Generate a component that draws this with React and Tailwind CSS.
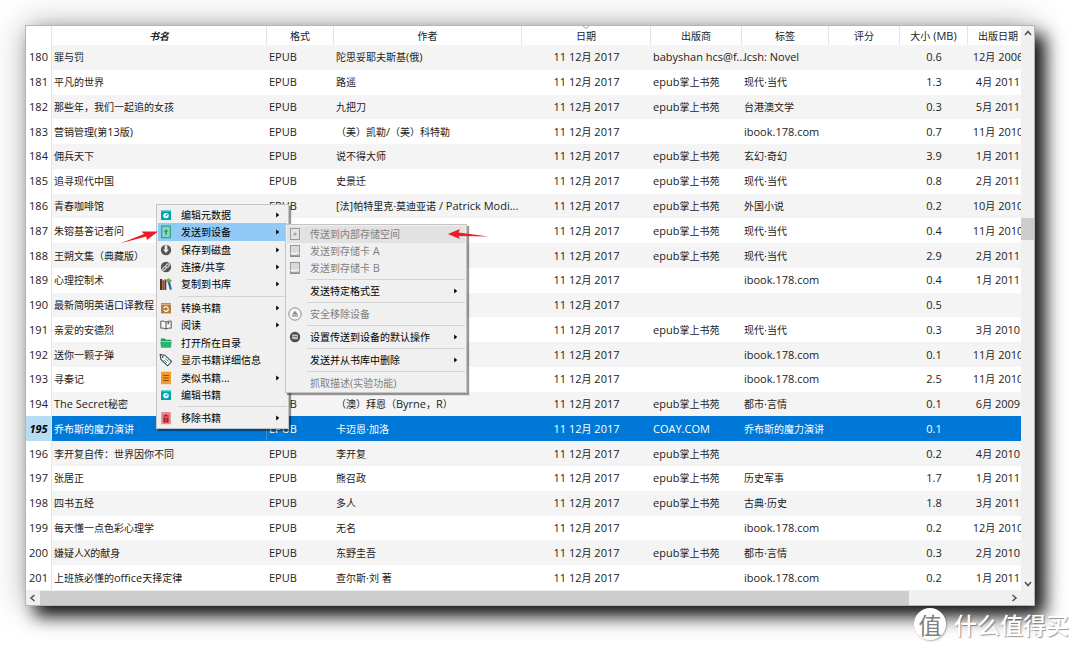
// App.jsx
import React from 'react';

const publisher = 'epub掌上书苑';
const addedOn = '11 12月 2017';

const books = [
    { id: 180, title: '罪与罚', author: '陀思妥耶夫斯基(俄)', publisher: 'babyshan hcs@f...', tags: 'lcsh: Novel', size: '0.6', published: '12月 2006' },
    { id: 181, title: '平凡的世界', author: '路遥', publisher, tags: '现代·当代', size: '1.3', published: '4月 2011' },
    { id: 182, title: '那些年，我们一起追的女孩', author: '九把刀', publisher, tags: '台港澳文学', size: '0.3', published: '5月 2011' },
    { id: 183, title: '营销管理(第13版)', author: '（美）凯勒/（美）科特勒', publisher: '', tags: 'ibook.178.com', size: '0.7', published: '11月 2010' },
    { id: 184, title: '佣兵天下', author: '说不得大师', publisher, tags: '玄幻·奇幻', size: '3.9', published: '1月 2011' },
    { id: 185, title: '追寻现代中国', author: '史景迁', publisher, tags: '现代·当代', size: '0.8', published: '2月 2011' },
    { id: 186, title: '青春咖啡馆', author: '[法]帕特里克·莫迪亚诺 / Patrick Modi...', publisher, tags: '外国小说', size: '0.2', published: '10月 2010' },
    { id: 187, title: '朱镕基答记者问', author: '', publisher, tags: '现代·当代', size: '0.4', published: '11月 2010' },
    { id: 188, title: '王朔文集（典藏版）', author: '', publisher, tags: '现代·当代', size: '2.9', published: '2月 2011' },
    { id: 189, title: '心理控制术', author: '', publisher: '', tags: 'ibook.178.com', size: '0.4', published: '1月 2011' },
    { id: 190, title: '最新简明英语口译教程', author: '', publisher: '', tags: '', size: '0.5', published: '' },
    { id: 191, title: '亲爱的安德烈', author: '', publisher, tags: '现代·当代', size: '0.3', published: '3月 2010' },
    { id: 192, title: '送你一颗子弹', author: '', publisher: '', tags: 'ibook.178.com', size: '0.1', published: '11月 2010' },
    { id: 193, title: '寻秦记', author: '', publisher: '', tags: 'ibook.178.com', size: '2.5', published: '11月 2010' },
    { id: 194, title: 'The Secret秘密', author: '（澳）拜恩（Byrne，R）', publisher, tags: '都市·言情', size: '0.1', published: '6月 2009' },
    { id: 195, title: '乔布斯的魔力演讲', author: '卡迈恩·加洛', publisher: 'COAY.COM', tags: '乔布斯的魔力演讲', size: '0.1', published: '' },
    { id: 196, title: '李开复自传：世界因你不同', author: '李开复', publisher, tags: '', size: '0.2', published: '4月 2010' },
    { id: 197, title: '张居正', author: '熊召政', publisher, tags: '历史军事', size: '1.7', published: '1月 2011' },
    { id: 198, title: '四书五经', author: '多人', publisher, tags: '古典·历史', size: '1.8', published: '3月 2011' },
    { id: 199, title: '每天懂一点色彩心理学', author: '无名', publisher: '', tags: 'ibook.178.com', size: '0.2', published: '12月 2010' },
    { id: 200, title: '嫌疑人X的献身', author: '东野圭吾', publisher, tags: '都市·言情', size: '0.3', published: '2月 2010' },
    { id: 201, title: '上班族必懂的office天择定律', author: '查尔斯·刘 著', publisher: '', tags: 'ibook.178.com', size: '0.2', published: '1月 2011' },
];

const selectedId = 195;

// Chinese runs are set one size smaller than the latin text around them
const Mixed = ({ text }) =>
    text
        .split(/([\u3000-\u303f\u4e00-\u9fff\uff00-\uffef]+)/)
        .filter(Boolean)
        .map((part, i) =>
            /[\u3000-\u303f\u4e00-\u9fff\uff00-\uffef]/.test(part)
                ? <span key={i} className="text-[10px]">{part}</span>
                : part
        );

const EditIcon = () => (
    <svg viewBox="0 0 12 12" className="size-3">
        <path d="M1 1h10v10H1z" fill="#00a4ae" />
        <path d="M1 1h10v1.4H1z" fill="#6fd0d4" />
        <circle cx="6" cy="6.6" r="2.7" fill="#fff" />
        <path d="M5 7.6l.3-1.2 1.7-1.7.9.9-1.7 1.7z" fill="#00a4ae" />
    </svg>
);

const SendIcon = () => (
    <svg viewBox="0 0 12 14" className="h-3.5 w-3">
        <rect x="1.7" y="1.2" width="8.6" height="11.4" fill="#93d3cf" stroke="#27ae73" strokeWidth="1.3" />
        <path d="M6 4l2.4 2.8H6.9v3H5.1v-3H3.6z" fill="#27a060" />
    </svg>
);

const SaveIcon = () => (
    <svg viewBox="0 0 12 12" className="size-3">
        <circle cx="6" cy="6" r="5.2" fill="#555" />
        <path d="M4.7 1.2h2.6v4.400h1.6L6 9 3.100 5.600h1.600z" fill="#eee" />
    </svg>
);

const ShareIcon = () => (
    <svg viewBox="0 0 12 12" className="size-3">
        <circle cx="6" cy="6" r="5.2" fill="#555" />
        <g fill="none" stroke="#eee" strokeWidth="1">
            <rect x="5.6" y="3.4" width="4" height="2.4" rx="1.2" transform="rotate(-45 7.6 4.6)" />
            <rect x="2.4" y="6.2" width="4" height="2.4" rx="1.2" transform="rotate(-45 4.4 7.4)" />
        </g>
    </svg>
);

const LibraryIcon = () => (
    <svg viewBox="0 0 12 12" className="size-3">
        <path d="M0 1h2.3v11H0z" fill="#4a3428" />
        <path d="M2.3 2.4h2.2V12H2.3z" fill="#b3472b" />
        <path d="M4.5 1.4h1.8V12H4.5z" fill="#59432f" />
        <path d="M7.500 3.200l2.200-.5 2.200 8.600-2 .6z" fill="#2f62a8" />
        <path d="M6 3.400L7 1l2.200-.8.8 1.200 1.800.6-.8 2-1.800-.2-1.200.8z" fill="#68ad3c" />
    </svg>
);

const ConvertIcon = () => (
    <svg viewBox="0 0 12 12" className="size-3">
        <path d="M1 1h10v10.4H1z" fill="#b97a3c" />
        <path d="M1 1.8h10v.9H1z" fill="#e5c7a5" />
        <circle cx="6" cy="7" r="2.3" fill="none" stroke="#fff" strokeWidth="1.2" strokeDasharray="5.5 1.7" />
    </svg>
);

const ReadIcon = () => (
    <svg viewBox="0 0 12 12" className="size-3">
        <path d="M6 3.2C4.8 2.2 3 2 .8 2.2v7c2.200-.2 4 0 5.200 1 1.200-1 3-1.200 5.200-1v-7C9 2 7.200 2.200 6 3.200zM6 3.200v7" fill="#f6f6f6" stroke="#555" strokeWidth="1" />
        <path d="M7.600 2.600h1.600v3l-.8-.7-.8.7z" fill="#666" />
    </svg>
);

const FolderIcon = () => (
    <svg viewBox="0 0 12 12" className="size-3">
        <path d="M.8 1.500h4l1 1.200h5.400v1.500H.8z" fill="#1f9a57" />
        <path d="M.3 4.800h11.400L11 10.800H1z" fill="#2bb56d" />
    </svg>
);

const TagIcon = () => (
    <svg viewBox="0 0 14 14" className="size-3.5">
        <path d="M1.200 1.600l4.600.6 6.800 6.400-4 4.200-6.800-6.600z" fill="#fff" stroke="#444" strokeWidth="1.100" />
        <circle cx="3.700" cy="4" r=".9" fill="#444" />
        <path d="M6 5.200l3.600 3.400M5 7l3 3" stroke="#2aa9b8" strokeWidth="1" />
    </svg>
);

const SimilarIcon = () => (
    <svg viewBox="0 0 12 14" className="h-3.5 w-3">
        <path d="M1 .8h10v12.400H1z" fill="#f39a2c" />
        <path d="M3.200 4.500h5.600M3.200 7h5.600M3.200 9.500h5.600" stroke="#8a5210" strokeWidth="1" />
    </svg>
);

const RemoveIcon = () => (
    <svg viewBox="0 0 12 14" className="h-3.5 w-3">
        <path d="M1.200 1h9.600v12.200H1.200z" fill="#e58a90" />
        <path d="M3 4.600h6v1H3zM4.800 3.400h2.400v1H4.800zM3.400 6.400h5.200v5H3.400z" fill="#b3121f" />
        <path d="M4.800 8h2.400M4.800 9.800h2.400" stroke="#e58a90" strokeWidth=".7" />
    </svg>
);

const MemoryIcon = () => (
    <svg viewBox="0 0 12 14" className="h-3.5 w-3">
        <rect x="1.500" y="1.500" width="9" height="11" fill="#e4e4e4" stroke="#999" />
        <circle cx="6" cy="7" r="1.600" fill="#999" />
        <circle cx="6" cy="7" r=".6" fill="#eee" />
    </svg>
);

const CardIcon = () => (
    <svg viewBox="0 0 12 14" className="h-3.5 w-3">
        <rect x="1.500" y="1.500" width="9" height="11" fill="#d9d9d9" stroke="#999" />
        <path d="M1.500 9.500c2-1.500 3 1 5 0s2-2 4 0" fill="none" stroke="#fff" />
        <path d="M1.500 12h9" stroke="#888" strokeWidth="1.400" />
    </svg>
);

const EjectIcon = () => (
    <svg viewBox="0 0 14 14" className="size-3.5">
        <circle cx="7" cy="7" r="6.200" fill="#f6f6f6" stroke="#8c8c8c" />
        <path d="M7 3.800l3 3.600H4zM4 8.200h6v1.300H4z" fill="#8a8a8a" />
    </svg>
);

const DefaultIcon = () => (
    <svg viewBox="0 0 12 12" className="size-3">
        <circle cx="6" cy="6" r="5.200" fill="#4a4a4a" />
        <path d="M3.300 3.600h5.400v4.600H3.300z" fill="#ddd" />
        <path d="M4 5.300h4M4.400 7h1M6.600 7h1" stroke="#4a4a4a" strokeWidth=".9" />
    </svg>
);

const mainMenu = [
    { label: '编辑元数据', icon: <EditIcon />, more: true },
    { label: '发送到设备', icon: <SendIcon />, more: true, active: true },
    { label: '保存到磁盘', icon: <SaveIcon />, more: true },
    { label: '连接/共享', icon: <ShareIcon />, more: true },
    { label: '复制到书库', icon: <LibraryIcon />, more: true },
    null,
    { label: '转换书籍', icon: <ConvertIcon />, more: true },
    { label: '阅读', icon: <ReadIcon />, more: true },
    { label: '打开所在目录', icon: <FolderIcon /> },
    { label: '显示书籍详细信息', icon: <TagIcon /> },
    { label: '类似书籍...', icon: <SimilarIcon />, more: true },
    { label: '编辑书籍', icon: <EditIcon /> },
    null,
    { label: '移除书籍', icon: <RemoveIcon />, more: true },
];

const sendMenu = [
    { label: '传送到内部存储空间', icon: <MemoryIcon />, disabled: true, hover: true },
    { label: '发送到存储卡 A', icon: <CardIcon />, disabled: true },
    { label: '发送到存储卡 B', icon: <CardIcon />, disabled: true },
    null,
    { label: '发送特定格式至', more: true },
    null,
    { label: '安全移除设备', icon: <EjectIcon />, disabled: true },
    null,
    { label: '设置传送到设备的默认操作', icon: <DefaultIcon />, more: true },
    null,
    { label: '发送并从书库中删除', more: true },
    null,
    { label: '抓取描述(实验功能)', disabled: true },
];

const Menu = ({ items, className }) => (
    <div role="menu" className={`absolute flex flex-col border border-[#c4c4c4] bg-[#f0f0f0] p-px shadow-[2px_2px_1px_rgba(0,0,0,0.4)] ${className}`}>
        {items.map((item, i) => item === null ? (
            <div key={i} role="separator" className="ml-5 flex h-[6px] items-center">
                <div className="h-px w-full bg-[#d4d4d4]"></div>
            </div>
        ) : (
            <button
                key={i}
                type="button"
                role="menuitem"
                disabled={item.disabled}
                className={`flex min-h-0 flex-1 items-center pr-[7px] text-left leading-4 ${item.disabled ? 'text-[#808080]' : 'text-black'} ${item.active ? 'bg-[#91c9f7]' : ''} ${item.hover ? 'bg-[#e2e2e2]' : ''}`}
            >
                <span className="flex w-4 shrink-0 justify-center">{item.icon}</span>
                <span className="ml-[7px] flex-1 whitespace-nowrap"><Mixed text={item.label} /></span>
                {item.more && (
                    <svg viewBox="0 0 4 6" className="h-[6px] w-1"><path d="M.2.400l3 2.600-3 2.600z" fill="#000" /></svg>
                )}
            </button>
        ))}
    </div>
);

const Chevron = ({ d }) => (
    <svg viewBox="0 0 8 8" className="size-2"><path d={d} fill="none" stroke="#505050" strokeWidth="1.500" /></svg>
);

const headCell = 'border-r border-[#e5e5e5] p-0 font-normal';
const cell = 'whitespace-nowrap p-0 pl-[2px]';

const BookTable = () => (
    <table className="h-full w-full table-fixed border-separate border-spacing-0 bg-white">
        <colgroup>
            <col className="w-[26px]" />
            <col />
            <col className="w-[67px]" />
            <col className="w-[188px]" />
            <col className="w-[129px]" />
            <col className="w-[91px]" />
            <col className="w-[87px]" />
            <col className="w-[71px]" />
            <col className="w-[68px]" />
            <col className="w-[53px]" />
        </colgroup>
        <thead>
            <tr className="h-[19px]">
                <th className={headCell}></th>
                <th className={`${headCell} italic`}><span className="text-[10px] font-bold">书名</span></th>
                <th className={headCell}><Mixed text="格式" /></th>
                <th className={headCell}><Mixed text="作者" /></th>
                <th className={`${headCell} relative`}>
                    <svg viewBox="0 0 6 3" className="absolute left-1/2 top-0 h-[3px] w-[6px] -translate-x-1/2"><path d="M0 0l3 2.500L6 0" fill="none" stroke="#888" strokeWidth=".8" /></svg>
                    <Mixed text="日期" />
                </th>
                <th className={headCell}><Mixed text="出版商" /></th>
                <th className={headCell}><Mixed text="标签" /></th>
                <th className={headCell}><Mixed text="评分" /></th>
                <th className={headCell}><Mixed text="大小 (MB)" /></th>
                <th className="overflow-hidden p-0 font-normal"><div className="w-[60px]"><Mixed text="出版日期" /></div></th>
            </tr>
        </thead>
        <tbody>
            {books.map((book) => {
                const selected = book.id === selectedId;
                return (
                    <tr key={book.id} className={selected ? 'bg-[#0078d7] text-white' : 'odd:bg-[#f4f4f4]'}>
                        <th scope="row" className={`border-r border-[#e5e5e5] p-0 ${selected ? 'bg-[#b9dcf5] font-bold italic text-black' : 'bg-white font-normal'}`}>{book.id}</th>
                        <td className={`${cell} ${selected ? 'border-r border-[#4a8fc4]' : ''}`}><Mixed text={book.title} /></td>
                        <td className={cell}>EPUB</td>
                        <td className={cell}><Mixed text={book.author} /></td>
                        <td className="p-0 text-center"><Mixed text={addedOn} /></td>
                        <td className={cell}><Mixed text={book.publisher} /></td>
                        <td className={cell}><Mixed text={book.tags} /></td>
                        <td className={cell}></td>
                        <td className="p-0 text-center">{book.size}</td>
                        <td className="overflow-hidden whitespace-nowrap p-0"><div className="w-[60px] text-center"><Mixed text={book.published} /></div></td>
                    </tr>
                );
            })}
        </tbody>
    </table>
);

const App = () => {
    return (
        <div lang="zh-CN" className="relative flex h-screen overflow-hidden bg-white pb-[45px] pl-[25px] pr-[45px] pt-[25px] font-['Open_Sans','Noto_Sans_CJK_SC',sans-serif] text-[11px] leading-4 text-[#222]">
            <div className="relative flex min-w-0 flex-1 flex-col border border-[#b4b4ba] bg-[#f0f0f0] shadow-[10px_10px_16px_rgba(0,0,0,0.9),0_0_32px_rgba(0,0,0,0.3)]">
                <div className="flex min-h-0 flex-1">
                    <div className="min-w-0 flex-1 overflow-hidden pb-px"><BookTable /></div>
                    <div className="flex w-[13px] flex-col">
                        <button type="button" aria-label="向上滚动" className="flex h-[14px] items-center justify-center"><Chevron d="M1 6l3-3.500L7 6" /></button>
                        <div className="grow-[178]"></div>
                        <div className="h-[22px] bg-[#cdcdcd]"></div>
                        <div className="grow-[337]"></div>
                        <button type="button" aria-label="向下滚动" className="flex h-[14px] items-center justify-center"><Chevron d="M1 2l3 3.500L7 2" /></button>
                    </div>
                </div>
                <div className="flex h-[14px]">
                    <button type="button" aria-label="向左滚动" className="flex w-[14px] items-center justify-center"><Chevron d="M5.500 1L2 4l3.500 3" /></button>
                    <div className="grow-[869] bg-[#cdcdcd]"></div>
                    <div className="grow-[98]"></div>
                    <button type="button" aria-label="向右滚动" className="flex w-[14px] items-center justify-center"><Chevron d="M2.500 1L6 4 2.500 7" /></button>
                    <div className="w-[13px]"></div>
                </div>

                <Menu items={mainMenu} className="left-[130px] top-[178px] h-[225px] w-[133px]" />
                <Menu items={sendMenu} className="left-[259px] top-[198px] h-[169px] w-[182px]" />

                <svg viewBox="0 0 40 14" className="absolute left-[93px] top-[204px] h-[14px] w-10">
                    <path d="M1 13.500L25 4l-2.500-2.500L39 1.500 28 10l-.8-3.500z" fill="#ed1c24" />
                </svg>
                <svg viewBox="0 0 42 12" className="absolute left-[421px] top-[202px] h-3 w-[42px]">
                    <path d="M1 6L13 1l-1.500 3.500L41.500 8.500 11.500 7.900 13 11z" fill="#ed1c24" />
                </svg>
            </div>

            <div className="absolute bottom-[11px] right-[11px] flex items-center gap-2">
                <span className="flex size-8 items-center justify-center rounded-full bg-white font-['Noto_Sans_CJK_SC',sans-serif] text-[23px] leading-8 text-[#808080] shadow-[1px_1px_2px_rgba(0,0,0,0.3)]">值</span>
                <span className="font-['Noto_Sans_CJK_SC',sans-serif] text-[23px] font-medium leading-8 text-white [text-shadow:1px_1px_1px_rgba(0,0,0,0.4)]">什么值得买</span>
            </div>
        </div>
    );
};

export default App;
